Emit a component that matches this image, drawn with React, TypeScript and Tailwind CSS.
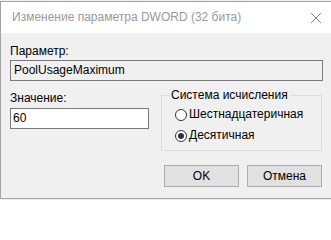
import React from "react";

function Radio({ label, checked }: { label: string; checked?: boolean }) {
  return (
    <div className="flex h-[21px] items-center gap-[2px]">
      <span className="flex h-[12px] w-[12px] items-center justify-center rounded-full border border-[#333333] bg-white">
        {checked && <span className="h-[6px] w-[6px] rounded-full bg-[#333333]" />}
      </span>
      <span>{label}</span>
    </div>
  );
}

export default function App() {
  return (
    <div
      className="h-[200px] w-[331px] overflow-hidden bg-[#f0f0f0] pt-[1px] text-[12px] leading-[15px] text-black"
      style={{ fontFamily: '"Liberation Sans", Arial, sans-serif' }}
    >
      <div className="flex h-[198px] w-[331px] flex-col border-y border-l border-[#a3a3a3]">
        <div className="flex h-[31px] shrink-0 items-center justify-between bg-white pl-[11px] pr-[9px] text-[#9a9a9a]">
          <span>Изменение параметра DWORD (32 бита)</span>
          <svg width="12" height="12" viewBox="0 0 12 12">
            <path d="M1 1 L11 11 M11 1 L1 11" stroke="#8a8a8a" strokeWidth="1" fill="none" />
          </svg>
        </div>
        <div className="flex flex-1 flex-col px-[9px]">
          <p className="mt-[11px]">Параметр:</p>
          <div className="mt-[1px] flex h-[21px] w-[313px] items-center border border-[#7a7a7a] bg-[#f0f0f0] pl-[3px]">
            PoolUsageMaximum
          </div>
          <div className="flex gap-[12px]">
            <div className="flex w-[139px] flex-col">
              <p className="mt-[10px]">Значение:</p>
              <div className="mt-[2px] flex h-[21px] items-center border border-[#7a7a7a] bg-white pl-[2px]">
                60
              </div>
            </div>
            <div className="flex w-[161px] flex-col">
              <div className="mt-[14px] flex h-[56px] flex-col border border-[#dcdcdc] pl-[13px]">
                <span className="-mt-[8px] ml-[-6px] self-start bg-[#f0f0f0] px-[2px]">Система исчисления</span>
                <div className="mt-[1px] flex flex-col">
                  <Radio label="Шестнадцатеричная" />
                  <Radio label="Десятичная" checked />
                </div>
              </div>
              <div className="mt-[14px] flex justify-end gap-[8px]">
                <button className="h-[22px] w-[75px] border border-[#adadad] bg-[#e1e1e1]">OK</button>
                <button className="h-[22px] w-[75px] border border-[#adadad] bg-[#e1e1e1]">Отмена</button>
              </div>
            </div>
          </div>
        </div>
      </div>
    </div>
  );
}
